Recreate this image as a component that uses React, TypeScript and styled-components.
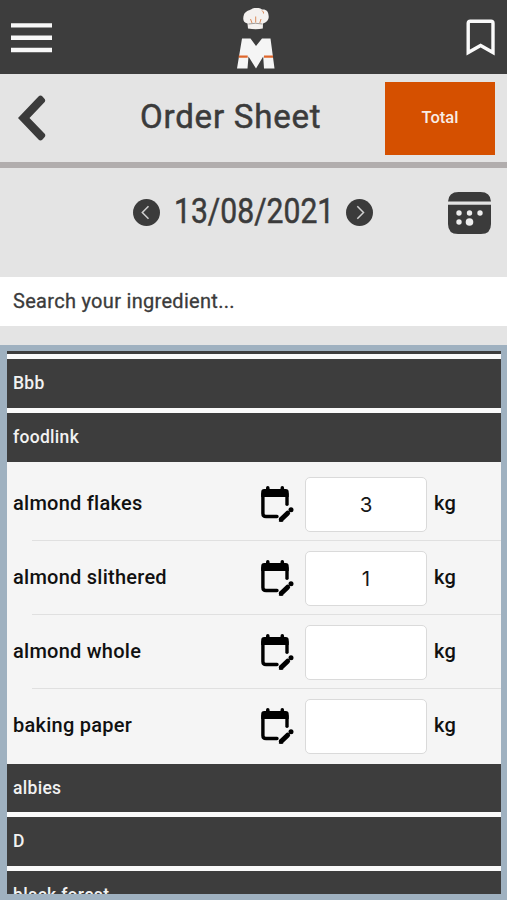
import React from "react";
import styled, { createGlobalStyle } from "styled-components";

const GlobalStyle = createGlobalStyle`
  * { box-sizing: border-box; }
  body { margin: 0; background: #e4e4e4; font-family: Roboto, "Liberation Sans", sans-serif; }
  button { border: 0; padding: 0; background: none; font: inherit; color: inherit; display: flex; }
  svg { display: block; }
`;

const Screen = styled.div`
  width: 100%;
  height: 900px;
  display: flex;
  flex-direction: column;
  overflow: hidden;
  background: #e4e4e4;
  color: #3b3b3b;
`;

const TopBar = styled.header`
  height: 74px;
  flex: none;
  display: grid;
  grid-template-columns: 1fr auto 1fr;
  padding: 0 11px;
  background: #3d3d3d;
`;

const MenuButton = styled.button`
  justify-self: start;
  align-self: start;
  margin-top: 23px;
`;

const Logo = styled.div`
  margin: 8px 0 0 4px;
`;

const BookmarkButton = styled.button`
  justify-self: end;
  align-self: start;
  margin-top: 18px;
`;

const TitleBar = styled.section`
  height: 94px;
  flex: none;
  display: flex;
  align-items: flex-start;
  padding: 8px 12px 0 18px;
  border-bottom: 6px solid #b1adad;
`;

const BackButton = styled.button`
  margin-top: 13px;
`;

const Title = styled.h1`
  margin: 15px 0 0;
  flex: 1;
  padding-left: 94px;
  font-size: 33px;
  line-height: 40px;
  font-weight: 400;
  letter-spacing: 0.8px;
  white-space: nowrap;
  -webkit-text-stroke: 0.5px;
`;

const TotalButton = styled.button`
  && {
    width: 110px;
    height: 73px;
    flex: none;
    align-items: center;
    justify-content: center;
    padding-bottom: 2px;
    background: #d55000;
    color: #f8ece4;
    font-size: 16.5px;
    font-weight: 500;
  }
`;

const DateBar = styled.section`
  height: 109px;
  flex: none;
  display: flex;
  align-items: flex-start;
  padding: 24px 16px 0 133px;
`;

const StepButton = styled.button`
  margin-top: 7px;
`;

const DateText = styled.span`
  flex: 0 0 172px;
  width: 172px;
  margin-left: 14px;
  font-size: 34.5px;
  line-height: 38px;
  white-space: nowrap;
  transform: scaleX(0.873);
  transform-origin: left center;
  -webkit-text-stroke: 0.5px;
`;

const CalendarButton = styled.button`
  margin-left: auto;
`;

const Search = styled.input`
  height: 49px;
  flex: none;
  width: 100%;
  border: 0;
  padding: 0 13px 1px;
  background: #fff;
  font: 400 20px Roboto, sans-serif;
  letter-spacing: 0.3px;
  &::placeholder { color: #3b3b3b; opacity: 1; -webkit-text-stroke: 0.3px; }
`;

const ListFrame = styled.main`
  margin-top: 19px;
  flex: 1;
  min-height: 0;
  padding: 6px 6px 6px 7px;
  background: #9fb1c0;
`;

const List = styled.div`
  height: 100%;
  overflow: hidden;
  display: flex;
  flex-direction: column;
  background: #f5f5f5;
`;

const Supplier = styled.div<{ $open?: boolean }>`
  height: ${(p) => (p.$open ? 49 : 54)}px;
  flex: none;
  padding: 0 6px;
  background: #3d3d3d;
  border-bottom: ${(p) => (p.$open ? 0 : 5)}px solid #fafafa;
  color: #f2f2f2;
  font-size: 17.5px;
  line-height: 48px;
  font-weight: 500;
  letter-spacing: 0.3px;
`;

const ClosedSupplier = styled(Supplier)`
  height: 53.5px;
`;

const PreviousSupplier = styled.div`
  height: 8px;
  flex: none;
  border-top: 3px solid #3d3d3d;
  background: #fafafa;
`;

const Items = styled.div`
  flex: none;
  height: 301.5px;
  padding-top: 5px;
  color: #111;
`;

const Item = styled.div`
  height: 74px;
  display: grid;
  grid-template-columns: 246px 46px 122px 1fr;
  align-items: center;
  padding: 0 0 2px 6px;
  font-size: 20px;
  font-weight: 500;
  letter-spacing: 0.25px;
  background: linear-gradient(#e0e0e0, #e0e0e0) 25px 100% / 100% 1px no-repeat;
  &:last-child { background: none; }
`;

const Quantity = styled.input`
  width: 122px;
  height: 55px;
  margin-top: 3px;
  border: 1.5px solid #dadada;
  border-radius: 5px;
  background: #fff;
  padding: 0;
  text-align: center;
  color: #171717;
  font: 400 20.5px Inter, sans-serif;
`;

const Unit = styled.span`
  padding-left: 7px;
`;

const Schedule = styled.span`
  padding: 3px 0 0 1px;
`;

const Chevron = ({ next }: { next?: boolean }) => (
  <svg width="27" height="27" viewBox="0 0 27 27">
    <circle cx="13.5" cy="13.5" r="13.5" fill="#3b3b3b" />
    <path d={next ? "M11.3 7.2l6.2 6.3-6.2 6.3" : "M15.5 7.2l-6.2 6.3 6.2 6.3"} fill="none" stroke="#d0d0d0" strokeWidth="1.5" />
  </svg>
);

const ScheduleIcon = () => (
  <svg width="34" height="37" viewBox="0 0 34 37">
    <path d="M2.900 8V27.500Q2.900 30.500 6 30.500H17" fill="none" stroke="#000" strokeWidth="3.400" strokeLinecap="round" />
    <path d="M27 8V18.200" fill="none" stroke="#000" strokeWidth="3.400" strokeLinecap="round" />
    <path d="M1.200 11V6Q1.200 3 4.200 3H6V1.900a1.800 1.800 0 0 1 3.600 0V3H20.500V1.900a1.800 1.800 0 0 1 3.600 0V3h1.600q3 0 3 3v5z" />
    <path d="M21.300 33.200L27.600 27.200" stroke="#000" strokeWidth="5" strokeLinecap="round" />
    <path d="M18.900 35.800l.3-4.300 4.300 4z" />
    <circle cx="31" cy="23.700" r="2.500" />
  </svg>
);

const items = [
  { name: "almond flakes", quantity: "3" },
  { name: "almond slithered", quantity: "1" },
  { name: "almond whole", quantity: "" },
  { name: "baking paper", quantity: "" },
];

export default function App() {
  return (
    <>
      <GlobalStyle />
      <Screen>
        <TopBar>
          <MenuButton aria-label="Menu">
            <svg width="41" height="30" viewBox="0 0 41 30">
              <path d="M0 2.4h41M0 14.8h41M0 27h41" stroke="#f8f8f8" strokeWidth="4.4" />
            </svg>
          </MenuButton>
          <Logo>
            <svg width="38" height="62" viewBox="0 0 38 62">
              <path d="M11 20.500l-.5-5C6 14.500 5.500 11 7 6.500 8.500 3 12 2.500 14 1.500 17-.8 22-.8 25 1.500c4-.6 6.500 2 6.500 5.500 1 4-1.500 7.500-5.500 8.500l-.2 5Q19 22 11 20.500z" fill="#f4f1ef" />
              <path d="M11.500 16q7-1.500 14 0" fill="none" stroke="#8c8582" strokeWidth=".8" />
              <path d="M13.500 11l1.500 4M18.700 8.500v6M24 11l-1.200 4M25 2.500q2 1.500 1.500 3" fill="none" stroke="#d98a5b" strokeWidth="1" />
              <path d="M5 30.500H13.500l5.500 7.500L25 30.500h8.500L37.500 60.500H27l-.8-12-7.200 12L11.500 48.500l-1 12H0z" fill="#f5f5f5" />
              <path d="M1.700 48.700h9M27 48.700h9" stroke="#df672c" strokeWidth="2.300" />
            </svg>
          </Logo>
          <BookmarkButton aria-label="Bookmarks">
            <svg width="30" height="38" viewBox="0 0 30 38">
              <path d="M2.200 34.500V5.200Q2.200 3.200 4.200 3.200H25Q27 3.200 27 5.200V34.500L14.600 27.500z" fill="none" stroke="#fafafa" strokeWidth="3.400" />
            </svg>
          </BookmarkButton>
        </TopBar>

        <TitleBar>
          <BackButton aria-label="Back">
            <svg width="28" height="46" viewBox="0 0 28 46">
              <path d="M0 23L20.500 1.400Q22.500-.5 24.500 1.400L26.700 4Q27.700 5.500 26.700 7L11.500 23 26.700 38.800Q27.900 40.500 26.700 42l-2.200 2.500Q22.500 46.500 20.500 44.600z" fill="#3b3b3b" />
            </svg>
          </BackButton>
          <Title>Order Sheet</Title>
          <TotalButton>Total</TotalButton>
        </TitleBar>

        <DateBar>
          <StepButton aria-label="Previous day"><Chevron /></StepButton>
          <DateText>13/08/2021</DateText>
          <StepButton aria-label="Next day"><Chevron next /></StepButton>
          <CalendarButton aria-label="Choose a date">
            <svg width="43" height="42" viewBox="0 0 43 42">
              <path d="M0 9.500Q.5 0 10.500 0h22Q42.500 0 43 9.500zM0 12.700H43V32q0 10-10 10H10Q0 42 0 32z" fill="#3b3b3b" />
              <g fill="#eee">
                <circle cx="11" cy="21" r="2.700" />
                <circle cx="21.500" cy="21" r="2.700" />
                <circle cx="32" cy="21" r="2.700" />
                <circle cx="11" cy="30" r="2.700" />
                <circle cx="21.500" cy="30" r="3.800" />
              </g>
            </svg>
          </CalendarButton>
        </DateBar>

        <Search placeholder="Search your ingredient..." />

        <ListFrame>
          <List>
            <PreviousSupplier />
            <Supplier>Bbb</Supplier>
            <Supplier $open>foodlink</Supplier>
            <Items>
              {items.map((item) => (
                <Item key={item.name}>
                  <span>{item.name}</span>
                  <Schedule><ScheduleIcon /></Schedule>
                  <Quantity defaultValue={item.quantity} />
                  <Unit>kg</Unit>
                </Item>
              ))}
            </Items>
            <ClosedSupplier>albies</ClosedSupplier>
            <ClosedSupplier>D</ClosedSupplier>
            <ClosedSupplier>black forest</ClosedSupplier>
          </List>
        </ListFrame>
      </Screen>
    </>
  );
}
